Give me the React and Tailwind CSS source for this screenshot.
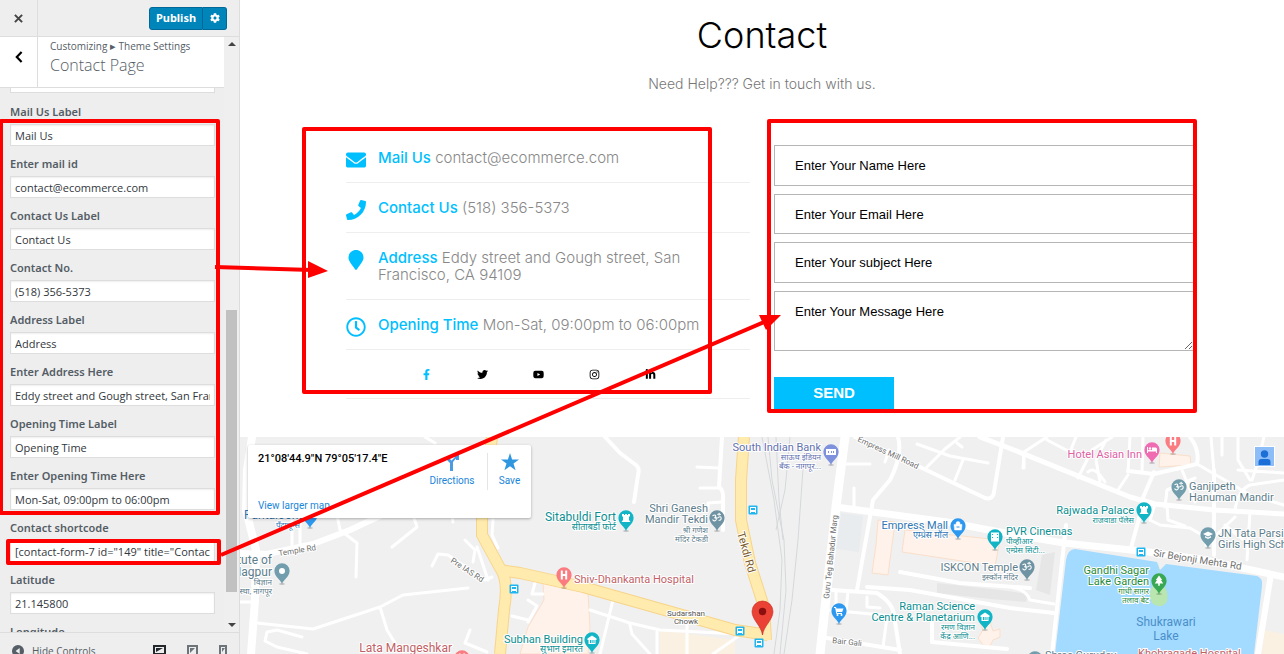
import {
  FaCog,
  FaEnvelope,
  FaFacebookF,
  FaInstagram,
  FaLinkedinIn,
  FaMapMarker,
  FaPhone,
  FaRegClock,
  FaTwitter,
  FaYoutube,
} from "react-icons/fa";

const fields = [
  { id: "mail-label", label: "Mail Us Label", value: "Mail Us" },
  { id: "mail-id", label: "Enter mail id", value: "contact@ecommerce.com" },
  { id: "contact-label", label: "Contact Us Label", value: "Contact Us" },
  { id: "contact-no", label: "Contact No.", value: "(518) 356-5373" },
  { id: "address-label", label: "Address Label", value: "Address" },
  { id: "address", label: "Enter Address Here", value: "Eddy street and Gough street, San Francisco, CA 94109" },
  { id: "opening-label", label: "Opening Time Label", value: "Opening Time" },
  { id: "opening", label: "Enter Opening Time Here", value: "Mon-Sat, 09:00pm to 06:00pm" },
  { id: "shortcode", label: "Contact shortcode", value: '[contact-form-7 id="149" title="Contact form 1"]' },
  { id: "latitude", label: "Latitude", value: "21.145800" },
  { id: "longitude", label: "Longitude", value: "79.088200" },
];

const details = [
  { icon: FaEnvelope, label: "Mail Us", text: "contact@ecommerce.com" },
  { icon: FaPhone, label: "Contact Us", text: "(518) 356-5373" },
  { icon: FaMapMarker, label: "Address", text: "Eddy street and Gough street, San Francisco, CA 94109" },
  { icon: FaRegClock, label: "Opening Time", text: "Mon-Sat, 09:00pm to 06:00pm" },
];

const socials = [
  { icon: FaFacebookF, name: "Facebook", color: "text-[#00bfff]" },
  { icon: FaTwitter, name: "Twitter", color: "text-black" },
  { icon: FaYoutube, name: "YouTube", color: "text-black" },
  { icon: FaInstagram, name: "Instagram", color: "text-black" },
  { icon: FaLinkedinIn, name: "LinkedIn", color: "text-black" },
];

function Sidebar() {
  return (
    <aside className="flex w-60 shrink-0 flex-col overflow-hidden border-r border-[#ddd] bg-[#eee] font-['Open_Sans','Noto_Sans',sans-serif] text-[#555d66]">
      <div className="flex h-[37px] shrink-0 border-b border-[#ddd]">
        <button aria-label="Close" className="flex w-[38px] items-center justify-center border-r border-[#ddd] text-[#444]">
          <svg viewBox="0 0 10 10" className="size-[9px]" stroke="currentColor" strokeWidth="2.2">
            <path d="M1 1 9 9M9 1 1 9" />
          </svg>
        </button>
        <div className="ml-auto mr-3 flex items-center">
          <button className="h-[23px] w-[54px] rounded-l-[3px] border border-[#006799] bg-[#0085ba] font-['Noto_Sans',sans-serif] text-[11px] leading-4 font-bold text-white">
            Publish
          </button>
          <button aria-label="Publish settings" className="flex h-[23px] w-6 items-center justify-center rounded-r-[3px] border border-l-0 border-[#006799] bg-[#0085ba] text-white">
            <FaCog className="size-[10px]" />
          </button>
        </div>
      </div>

      <div className="flex min-h-0 flex-1">
        <div className="flex w-56 flex-col overflow-hidden">
          <div className="flex h-[51px] shrink-0 border-b border-[#ddd] bg-white">
            <button aria-label="Back" className="flex w-[38px] items-center justify-center border-r border-[#ddd] pb-2.5 text-black">
              <svg viewBox="0 0 8 12" className="h-3 w-2" fill="none" stroke="currentColor" strokeWidth="2.2">
                <path d="M6.6 1 1.8 6l4.8 5" />
              </svg>
            </button>
            <div className="pt-px pl-3">
              <p className="text-[10px] leading-4">Customizing <span className="text-[11px]">▸</span> Theme Settings</p>
              <h1 className="text-base leading-[22px] font-light">Contact Page</h1>
            </div>
          </div>
          <div className="min-h-0 flex-1 overflow-hidden pr-[9px] pl-[10px]">
            <input aria-label="Previous setting" className="mb-3 block h-[5px] w-full border border-t-0 border-[#ddd] bg-white" readOnly />
            {fields.map((f) => (
              <div key={f.id} className="mb-[11px]">
                <label htmlFor={f.id} className="block h-[19px] font-['Noto_Sans',sans-serif] text-[11px] leading-[14px] font-semibold">{f.label}</label>
                <input
                  id={f.id}
                  defaultValue={f.value}
                  className="block h-[22px] w-full border border-[#ddd] bg-white px-1 text-[11px] text-[#32373c] shadow-[inset_0_1px_2px_rgba(0,0,0,0.07)]"
                />
              </div>
            ))}
          </div>
        </div>
        <div className="flex flex-1 flex-col items-center bg-[#efefef]">
          <svg viewBox="0 0 8 4" className="mt-[5px] h-1 w-2"><path d="M0 4 4 0 8 4Z" fill="#444" /></svg>
          <div className="flex w-[11px] flex-1 flex-col">
            <div className="flex-[264]" />
            <div className="flex-[282] bg-[#c1c1c1]" />
            <div className="flex-[31]" />
          </div>
          <svg viewBox="0 0 8 4" className="mb-[5px] h-1 w-2"><path d="M0 0 4 4 8 0Z" fill="#444" /></svg>
        </div>
      </div>

      <div className="flex h-[22px] shrink-0 overflow-hidden border-t border-[#ddd] pt-3 pr-3 pl-3">
        <button className="flex h-3 items-center gap-2 text-[10px] leading-3">
          <svg viewBox="0 0 12 12" className="size-3"><circle cx="6" cy="6" r="6" fill="#555d66" /><path d="M7.7 3v6L3.6 6Z" fill="#eee" /></svg>
          Hide Controls
        </button>
        <div className="ml-auto flex gap-[21px]">
          <button aria-label="Desktop preview">
            <svg viewBox="0 0 13 12" className="h-3 w-[13px]"><path d="M1 1h11v8H1Z" fill="none" stroke="#23282d" strokeWidth="2" /><path d="M3 3h7L3 7ZM3.5 10.5h6V12h-6Z" fill="#23282d" /></svg>
          </button>
          <button aria-label="Tablet preview">
            <svg viewBox="0 0 11 12" className="h-3 w-[11px]"><path d="M1 1h9v11H1Z" fill="none" stroke="#6c7379" strokeWidth="2" /><path d="M3 3h5L3 8Z" fill="#6c7379" /></svg>
          </button>
          <button aria-label="Mobile preview">
            <svg viewBox="0 0 8 12" className="h-3 w-2"><path d="M1 1h6v11H1Z" fill="none" stroke="#6c7379" strokeWidth="2" /><path d="M3 3h3L3 7Z" fill="#6c7379" /></svg>
          </button>
        </div>
      </div>
    </aside>
  );
}

function ContactDetails() {
  return (
    <div>
      <ul>
        {details.map(({ icon: Icon, label, text }) => (
          <li key={label} className="flex border-b border-[#eee] py-4 text-[#888]">
            <span className="flex h-4 w-8 shrink-0 pt-px">
              <Icon className="h-5 w-auto text-[#00bfff]" />
            </span>
            <p className="max-w-[340px] text-[15px] leading-[17px] font-light">
              <strong className="font-medium text-[#00bfff]">{label}</strong> {text}
            </p>
          </li>
        ))}
      </ul>
      <div className="flex h-[49px] items-center justify-center gap-[45px] border-b border-[#eee] pr-5">
        {socials.map(({ icon: Icon, name, color }) => (
          <a key={name} href="#" aria-label={name} className={color}>
            <Icon className="size-[11px]" />
          </a>
        ))}
      </div>
    </div>
  );
}

function ContactForm() {
  const box =
    "block w-full border border-[#b5b5b5] bg-white px-5 font-['Liberation_Sans',sans-serif] text-[13px] text-black placeholder:text-black placeholder:opacity-100";
  return (
    <form className="flex flex-col gap-2 pt-3">
      <input aria-label="Name" placeholder="Enter Your Name Here" className={`${box} h-[41px]`} />
      <input aria-label="Email" placeholder="Enter Your Email Here" className={`${box} h-10`} />
      <input aria-label="Subject" placeholder="Enter Your subject Here" className={`${box} h-[41px]`} />
      <textarea aria-label="Message" placeholder="Enter Your Message Here" className={`${box} h-[60px] pt-2.5`} />
      <button type="button" className="mt-[18px] h-8 w-[120px] bg-[#00bfff] font-['Liberation_Sans',sans-serif] text-[15px] font-bold text-white">
        SEND
      </button>
    </form>
  );
}

const roads = [
  { w: 8, d: "M252 437 247 470 246 510 256 550 255 600 251 654" },
  { w: 6, d: "M240 553 267 554 313 544 350 530 382 515" },
  { w: 3, d: "M292 518V548M300 518V546M337 515 340 530 357 543 356 577M413 515 417 527 392 547M452 515 453 522M432 566 438 554 448 555 485 580 492 577M465 540 475 550 473 562M477 547 488 580" },
  { w: 3, d: "M257 623 313 629 380 607 403 595 468 588M380 607 387 630 395 643M302 637 277 630 267 632 265 641 277 647 307 654M470 630 465 643 487 652M240 602H255M493 520 492 535 498 548M425 437 435 443" },
  { w: 4, d: "M605 437 620 453 636 465Q640 468 638 475L634 502M722 437 719 487Q723 490 723 496V530" },
  { w: 3, d: "M697 467 718 468M700 488H719M708 508V503L722 502M535 583 532 594H543M528 600 537 606 528 622M512 616 528 620M590 610 630 623 660 630 740 634M613 600 600 654M630 625 632 634 650 654M687 625V654M657 632V654M740 635 713 654" },
  { w: 9, d: "M845 437 836 507 828 580 820 654" },
  { w: 7, d: "M836 507 880 513 947 522 1010 534 1064 543 1141 551 1200 559 1284 577" },
  { w: 4, d: "M898 437Q903 455 890 480L873 500 857 590M855 437 920 467 985 498Q993 500 994 492L1003 437" },
  { w: 3, d: "M847 464H870M854 488V507M885 462 889 450M927 467 945 449 960 437M917 444 950 456 988 463M955 480 963 460M957 443 962 447M1024 456V468" },
  { w: 5, d: "M980 437 1014 450 1130 497 1155 504 1214 510 1284 514" },
  { w: 4, d: "M900 572 960 583 1030 588M867 587 910 590 1010 608 1054 613M832 590 877 593Q893 603 894 615L900 654M827 638 900 650M932 617V642L1007 649" },
  { w: 3, d: "M828 610 893 616M836 592V610M848 592 846 611M867 597V607L880 608M887 617 883 647M1014 588Q1026 590 1030 600L1054 604" },
  { w: 4, d: "M1066 525 1052 654M1144 500 1131 548M1154 472 1142 500M1128 471 1154 474 1197 464Q1200 450 1190 437M1214 470V555" },
  { w: 6, d: "M1271 574 1258 654" },
  { w: 3, d: "M1023 468 1024 452 1047 437M1047 440 1070 452 1076 437M1078 478 1092 450 1112 437M1100 482 1096 460 1106 440M1088 472Q1094 465 1105 482M1128 475 1118 490M1130 437 1128 472M1143 437 1142 472M1182 470 1195 502M1165 507 1167 490 1195 478M1197 464 1216 475 1230 483 1250 495 1284 505" },
  { w: 3, d: "M1211 437 1214 472M1238 437V460L1250 480M1222 437V455M1238 470 1284 473M1250 485 1284 480M1264 437 1258 462 1252 480M1150 520 1160 525 1190 528 1207 538M1206 545 1235 517M1225 525 1250 545M1250 512 1247 560M1270 545 1284 532M1155 504 1150 520M1167 505 1168 520 1185 526M1250 485Q1238 490 1235 510" },
];

function Pin({ x, y, color, children }) {
  return (
    <g transform={`translate(${x} ${y})`}>
      <ellipse cy="13" rx="3" ry="1" fill="#000" opacity=".18" />
      <path d="M0 13.5C-.8 8.8-7.6 6.2-7.6-.2a7.6 7.6 0 0 1 15.2 0C7.6 6.2.8 8.8 0 13.5Z" fill={color} />
      <g fill="#fff">{children || <circle r="3" />}</g>
    </g>
  );
}

const Fort = () => <path d="M-4-4h2v1h1v-1h2v1h1v-1h2v2.5H3V2l1.5 2h-9L-3 2v-3.5h-1Z" />;
const Museum = () => <path d="M0-4.5 4.5-1.5V0h-1v4h-7V0h-1v-1.5ZM-2 0v3h1V0Zm1.6 0v3h1V0ZM1.5 0v3h1V0Z" fillRule="evenodd" />;
const Om = () => (
  <g fill="none" stroke="#fff" strokeWidth="1.1" strokeLinecap="round">
    <path d="M-4-2.4Q-1.6-3.8-1.2-1.8-1.2-.6-2.6-.4-.4-.2-.8 1.800-2.200 4-4.200 1.800M-1.400-.4Q.6.600 1.600-.8 3.600-2 4.200.2 4 2.400 2 2.200M.8-3.600Q2-2.400 3.400-3.600" />
    <circle cx="2.200" cy="-4.400" r=".3" />
  </g>
);
const Cap = () => <path d="M0-3.5 5-1 0 1.5-5-1ZM-3 1 0 2.5 3 1v1.5L0 4-3 2.5Z" />;
const H = () => <path d="M-3.2-4.5h2V-1h2.4v-3.5h2v9h-2V1h-2.4v3.5h-2Z" />;

function Bus({ x, y }) {
  return (
    <g transform={`translate(${x} ${y})`}>
      <rect x="-4.5" y="-4.5" width="9" height="9" rx="1" fill="#1eb6f0" />
      <path d="M-3-3h6v6h-1v-1h-4v1h-1ZM-2-2v2h4v-2Z" fill="#fff" fillRule="evenodd" />
    </g>
  );
}

const teal = "#0b8f92";
const slate = "#5d7d8b";
const labels = [
  { x: 272, y: 564, s: 12, c: slate, t: "Institute of", a: "end" },
  { x: 272, y: 576, s: 12, c: slate, t: "Nagpur", a: "end" },
  { x: 272, y: 585, s: 8, c: slate, t: "विज्ञान", a: "end" },
  { x: 272, y: 594, s: 8, c: slate, t: "संस्था, नागपूर", a: "end" },
  { x: 244, y: 519, s: 12, c: "#2f77b5", t: "Pantaloons" },
  { x: 300, y: 528, s: 8, c: "#2f77b5", t: "पँटालून्स", a: "end" },
  { x: 452, y: 652, s: 12, c: "#c25f66", t: "Lata Mangeshkar", a: "end" },
  { x: 616, y: 521, s: 12, c: teal, t: "Sitabuldi Fort", a: "end" },
  { x: 616, y: 530, s: 9, c: teal, t: "सीताबर्डी फोर्ट", a: "end" },
  { x: 708, y: 512, s: 11, c: slate, t: "Shri Ganesh", a: "end" },
  { x: 708, y: 523, s: 11, c: slate, t: "Mandir Tekdi", a: "end" },
  { x: 708, y: 533, s: 8, c: slate, t: "श्री गणेश", a: "end" },
  { x: 708, y: 542, s: 8, c: slate, t: "मंदिर टेकडी", a: "end" },
  { x: 574, y: 583, s: 11, c: "#c25f66", t: "Shiv-Dhankanta Hospital" },
  { x: 583, y: 643, s: 11, c: teal, t: "Subhan Building", a: "end" },
  { x: 583, y: 652, s: 9, c: teal, t: "सुभान इमारत", a: "end" },
  { x: 686, y: 616, s: 8, c: "#555", t: "Sudarshan", a: "middle" },
  { x: 686, y: 624, s: 8, c: "#555", t: "Chowk", a: "middle" },
  { x: 821, y: 451, s: 11, c: "#6271b0", t: "South Indian Bank", a: "end" },
  { x: 821, y: 460, s: 8, c: "#6271b0", t: "साऊथ इंडियन", a: "end" },
  { x: 821, y: 469, s: 8, c: "#6271b0", t: "बँक - नागपूर...", a: "end" },
  { x: 948, y: 529, s: 11, c: "#2f77b5", t: "Empress Mall", a: "end" },
  { x: 948, y: 538, s: 9, c: "#2f77b5", t: "एम्प्रेस मॉल", a: "end" },
  { x: 1006, y: 535, s: 11, c: teal, t: "PVR Cinemas" },
  { x: 1006, y: 544, s: 8, c: teal, t: "पीव्हीआर" },
  { x: 1006, y: 553, s: 8, c: teal, t: "एम्प्रेस सिटी..." },
  { x: 1018, y: 571, s: 11, c: slate, t: "ISKCON Temple", a: "end" },
  { x: 1018, y: 580, s: 8, c: slate, t: "इस्कॉन मंदिर", a: "end" },
  { x: 975, y: 610, s: 11, c: teal, t: "Raman Science", a: "end" },
  { x: 975, y: 621, s: 11, c: teal, t: "Centre & Planetarium", a: "end" },
  { x: 975, y: 630, s: 8, c: teal, t: "रमण विज्ञान", a: "end" },
  { x: 975, y: 639, s: 8, c: teal, t: "केंद्र आणि...", a: "end" },
  { x: 1142, y: 458, s: 11, c: "#e060a4", t: "Hotel Asian Inn", a: "end" },
  { x: 1189, y: 490, s: 11, c: slate, t: "Ganjipeth" },
  { x: 1189, y: 501, s: 11, c: slate, t: "Hanuman Mandir" },
  { x: 1134, y: 514, s: 11, c: teal, t: "Rajwada Palace", a: "end" },
  { x: 1134, y: 523, s: 8, c: teal, t: "राजवाडा पॅलेस", a: "end" },
  { x: 1218, y: 537, s: 11, c: slate, t: "JN Tata Parsi" },
  { x: 1218, y: 548, s: 11, c: slate, t: "Girls High School" },
  { x: 1149, y: 574, s: 11, c: "#1f8a3c", t: "Gandhi Sagar", a: "end" },
  { x: 1149, y: 585, s: 11, c: "#1f8a3c", t: "Lake Garden", a: "end" },
  { x: 1149, y: 594, s: 8, c: "#1f8a3c", t: "गांधी सागर", a: "end" },
  { x: 1149, y: 603, s: 8, c: "#1f8a3c", t: "तलाव बेट", a: "end" },
  { x: 1166, y: 626, s: 12, c: "#4a8fc9", t: "Shukrawari", a: "middle", plain: true },
  { x: 1166, y: 640, s: 12, c: "#4a8fc9", t: "Lake", a: "middle", plain: true },
  { x: 1138, y: 657, s: 11, c: "#c25f66", t: "Khobragade Hospital" },
  { x: 1045, y: 659, s: 11, c: slate, t: "Shree Gurudev" },
  { x: 279, y: 556, s: 8, c: "#707070", t: "Temple Rd", r: -9 },
  { x: 450, y: 562, s: 8, c: "#707070", t: "Pre IAS Rd", r: 33 },
  { x: 737, y: 533, s: 11, c: "#7b5a2b", t: "Tekdi Rd", r: 74 },
  { x: 829, y: 599, s: 8, c: "#707070", t: "Guru Teg Bahadur Marg", r: -84 },
  { x: 857, y: 441, s: 8, c: "#707070", t: "Empress Mill Road", r: 25 },
  { x: 832, y: 643, s: 8, c: "#707070", t: "Bair Gali", r: 6 },
  { x: 1153, y: 556, s: 10, c: "#707070", t: "Sir Bejonji Mehta Rd", r: 9 },
];

function MapDrawing() {
  return (
    <svg viewBox="240 437 1044 217" preserveAspectRatio="xMinYMin slice" className="absolute inset-0 size-full" role="img" aria-label="Map">
      <path d="M240 437h1044v217H240Z" fill="#f0f0f0" />
      <path d="M543 583 588 593 590 627 588 654H520L528 627 544 600ZM905 530 1000 540 995 566 902 552ZM878 520 895 522 888 575 872 573 876 545ZM1160 453 1190 456 1191 465 1159 467ZM978 638 983 630 980 622 990 622 993 631 1000 629 1000 637 993 640 990 646 983 645Z" fill="#fff2ea" stroke="#fbdfca" />
      <path d="M660 630 735 640V654H660ZM1264 630 1284 634V654H1262Z" fill="#faf1e2" />
      <path d="M841 513 863 516 859 552 836 549Z" fill="#e8ecee" />
      <path d="M937 583 1000 590 1028 594 1026 602 990 599 937 593ZM1042 555 1055 552 1050 595 1036 590Z" fill="#e6e6e6" />
      <g fill="none" stroke="#d5d8da" strokeWidth="1">
        <path d="M762 437 774 500 782 560 780 610 774 654M768 437 772 480 784 540 786 590 780 654M776 437 779 500 783 540M804 455 798 540 792 600 784 654M790 437 785 490 776 530" />
      </g>
      <path d="M1066 560Q1068 549 1075 549L1157 562 1160 570 1166 564 1257 576Q1263 578 1262 586L1254 654H1055Z" fill="#a3daff" />
      <path d="M1159 562V580Q1170 590 1167 602 1160 610 1152 603 1146 590 1158 580Z" fill="#b9e5ae" />
      <g fill="none" stroke="#fff" strokeLinecap="round" strokeLinejoin="round">
        {roads.map((r) => (
          <path key={r.d} d={r.d} strokeWidth={r.w} />
        ))}
      </g>
      {[["#f7d48a", 12], ["#ffebae", 10]].map(([color, width]) => (
        <path
          key={color}
          d="M492 437 482 520V535L500 568Q509 580 504 610L500 654M500 570 520 573 583 587 700 620 735 630 768 635M744 437 741 480V520L750 563 764 607 766 640"
          fill="none"
          stroke={color}
          strokeWidth={width}
          strokeLinejoin="round"
        />
      ))}
      <Pin x={310} y={515} color="#2d98f0" />
      <Pin x={282} y={571} color="#719dac" />
      <Pin x={626} y={518} color="#12b5c6"><Fort /></Pin>
      <Pin x={717} y={518} color="#6f93a3"><Om /></Pin>
      <Pin x={564} y={575} color="#fa7b80"><H /></Pin>
      <Pin x={592} y={640} color="#12b5c6"><Museum /></Pin>
      <Pin x={831} y={452} color="#7d91dc"><path d="M-5-3H5V3H-5ZM-3-1v2h1V-1ZM0-1v2h1V-1ZM2-1v2h1V-1Z" fillRule="evenodd" /></Pin>
      <Pin x={958} y={526} color="#2d98f0"><path d="M-4-1.5h8L3.4 4h-6.8ZM-2-1v-1.5a2 2 0 0 1 4 0V-1" stroke="#fff" strokeWidth=".5" /><path d="M-1.5.5h3v1h-3Z" fill="#2d98f0" /></Pin>
      <Pin x={995} y={537} color="#12b5c6"><path d="M-4-4.5h8v9h-8ZM-3-3v1h1v-1Zm0 3v1h1V0Zm5-3v1h1v-1Zm0 3v1h1V0Z" fillRule="evenodd" /></Pin>
      <Pin x={1027} y={567} color="#6f93a3"><Om /></Pin>
      <Pin x={839} y={611} color="#2d98f0"><path d="M-5-4h2l.5 1.5H4.5L3.2 1h-5L-2 2H3v1h-5.5L-3 1.5-3.8-3H-5Z" /><circle cx="-1.5" cy="4" r="1" /><circle cx="2.5" cy="4" r="1" /></Pin>
      <Pin x={985} y={617} color="#12b5c6"><Museum /></Pin>
      <Pin x={1152} y={450} color="#f06cb2"><path d="M-5-3h1v3H0v-2.5h3.5a1.5 1.5 0 0 1 1.5 1.5v4H4V1.500H-4V3h-1Z" /><circle cx="-2" cy="-1.500" r="1.200" /></Pin>
      <Pin x={1173} y={441} color="#fa7b80"><H /></Pin>
      <Pin x={1179} y={487} color="#719dac"><Om /></Pin>
      <Pin x={1144} y={510} color="#12b5c6"><Fort /></Pin>
      <Pin x={1208} y={535} color="#719dac"><Cap /></Pin>
      <Pin x={1159} y={581} color="#38a852"><path d="M0-5.500 3.200-1H2L4.200 2.500H.8v2.200H-.8V2.500h-3.400L-2-1h-1.200Z" /></Pin>
      <Pin x={1035} y={659} color="#719dac"><Om /></Pin>
      <Pin x={462} y={658} color="#fa7b80"><H /></Pin>
      <Bus x={753} y={510} />
      <Bus x={514} y={589} />
      <Bus x={740} y={631} />
      <Bus x={759} y={643} />
      <Bus x={1141} y={552} />
      {labels.map((l) => (
        <text
          key={`${l.t}${l.x}${l.y}`}
          x={l.x}
          y={l.y}
          fontSize={l.s}
          fill={l.c}
          textAnchor={l.a}
          transform={l.r ? `rotate(${l.r} ${l.x} ${l.y})` : undefined}
          stroke={l.plain ? "none" : "#fff"}
          strokeWidth="2"
          strokeLinejoin="round"
          paintOrder="stroke"
          className="font-[Roboto,'Noto_Sans_Devanagari',sans-serif]"
        >
          {l.t}
        </text>
      ))}
      <path d="M762.500 635C761.500 626 752 620 752 611.500a10.500 10.500 0 0 1 21 0C773 620 763.500 626 762.500 635Z" fill="#ea4335" stroke="#c5221f" strokeWidth=".6" />
      <circle cx="762.500" cy="611.500" r="3.700" fill="#8c0f10" />
    </svg>
  );
}

function MapSection() {
  return (
    <section className="relative min-h-0 flex-1 overflow-hidden font-[Roboto,sans-serif]">
      <MapDrawing />
      <div className="absolute top-2 left-2 flex h-[73px] w-[283px] rounded-[2px] bg-white text-[#1a86d9] shadow-[0_1px_3px_rgba(0,0,0,0.3)]">
        <div className="flex flex-1 flex-col justify-between pt-2 pb-1 pl-[10px] text-[10px]">
          <p className="text-[11px] leading-3 font-medium whitespace-nowrap text-black">21°08'44.9"N 79°05'17.4"E</p>
          <a href="#" className="leading-4">View larger map</a>
        </div>
        <a href="#" className="flex w-[70px] flex-col items-center gap-1 pt-2 text-[10px] leading-3">
          <svg viewBox="0 0 16 18" className="h-[18px] w-4"><path d="M6 18V10L1 5l2-2 4.500 4.500L11 4H9V1h6v6h-3V5.500L9 9v9Z" fill="#4a9be0" /></svg>
          Directions
        </a>
        <a href="#" className="my-2 mb-7 flex w-[44px] flex-col items-center gap-1 border-l border-[#e5e5e5] text-[10px] leading-3">
          <svg viewBox="0 0 18 18" className="size-[18px] shrink-0"><path d="m9 0 2.100 6.500H18l-5.500 4.100 2.100 6.600L9 13.200l-5.600 4 2.100-6.600L0 6.500h6.900Z" fill="#2f97e0" /></svg>
          Save
        </a>
      </div>
      <button aria-label="Sign in" className="absolute top-[10px] right-[10px] size-[19px] bg-[#8cbdf8] shadow-[0_0_0_1px_#fff]">
        <svg viewBox="0 0 19 19"><circle cx="9.500" cy="7" r="3.700" fill="#1b6fd6" /><path d="M3.500 18v-3q0-3 3-3h6q3 0 3 3v3Z" fill="#1b6fd6" /></svg>
      </button>
    </section>
  );
}

function Annotations() {
  return (
    <svg className="pointer-events-none absolute inset-0 size-full" aria-hidden="true" fill="none" stroke="#f00" strokeWidth="4" strokeLinejoin="round">
      <rect x="1" y="121" width="217" height="392" />
      <rect x="8" y="541" width="211" height="22" />
      <rect x="304" y="129" width="406" height="263" />
      <rect x="769" y="121" width="426" height="290" />
      <path d="M215 267 312 270M221 555 764 322" />
      <path d="M328 271 308 261V278ZM781 315 759 315 766 330Z" fill="#f00" stroke="none" />
    </svg>
  );
}

export default function App() {
  return (
    <div className="relative flex h-screen overflow-hidden bg-white">
      <Sidebar />
      <main className="flex min-w-0 flex-1 flex-col font-[Inter,sans-serif]">
        <header className="pt-[14px] text-center">
          <h2 className="text-[36px] leading-[42px] font-light text-black">Contact</h2>
          <p className="mt-[18px] text-[14px] leading-5 font-light text-[#777]">Need Help??? Get in touch with us.</p>
        </header>
        <div className="mx-auto mt-[39px] mb-7 grid w-full max-w-[864px] grid-cols-[404fr_420fr] gap-6 pl-4">
          <ContactDetails />
          <ContactForm />
        </div>
        <MapSection />
      </main>
      <Annotations />
    </div>
  );
}
